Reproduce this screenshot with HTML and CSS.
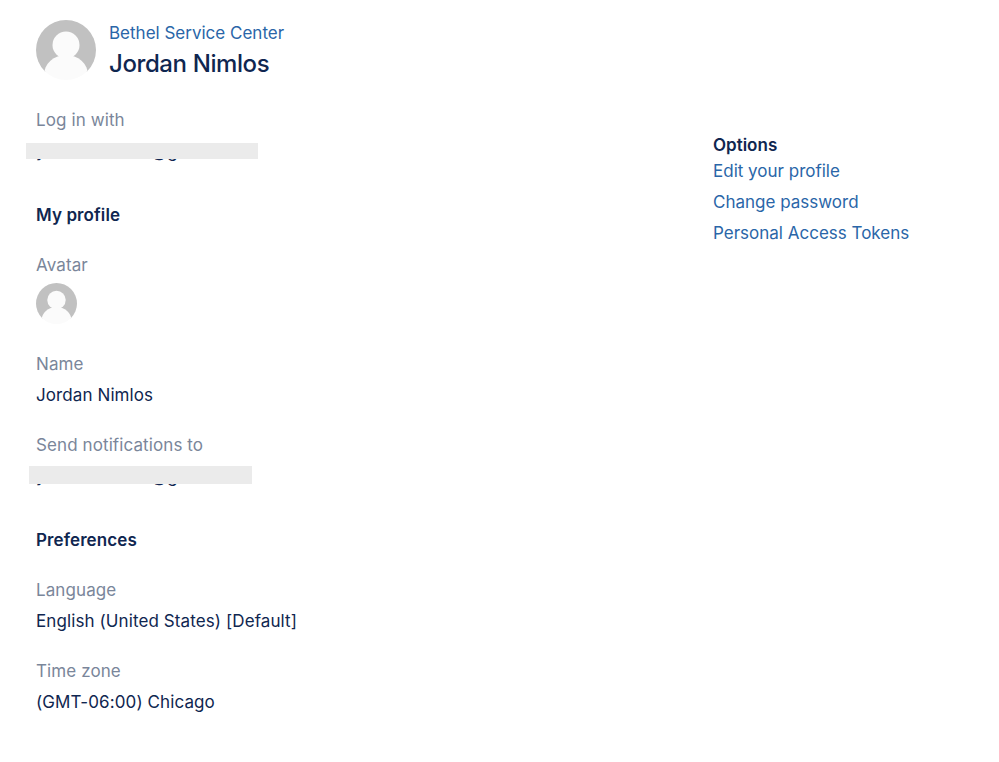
FILE: index.html
```html
<!DOCTYPE html>
<html>
<head>
<meta name="viewport" content="width=device-width, initial-scale=1">
<link rel="stylesheet" href="styles.css">
</head>
<body>

<div class="page-head">
  <svg class="avatar-lg" viewBox="0 0 60 60">
    <use href="#avatar"></use>
  </svg>
  <div>
    <a class="link crumb" href="#">Bethel Service Center</a>
    <h1>Jordan Nimlos</h1>
  </div>
</div>

<svg width="0" height="0" class="defs">
  <defs>
    <clipPath id="round"><circle cx="30" cy="30" r="30"></circle></clipPath>
    <g id="avatar" clip-path="url(#round)">
      <rect width="60" height="52" fill="#c1c1c1"></rect>
      <circle cx="30" cy="25" r="13.5" fill="#fbfbfb"></circle>
      <ellipse cx="30" cy="55" rx="22" ry="20" fill="#fbfbfb"></ellipse>
    </g>
  </defs>
</svg>

<div class="columns">
  <div class="main">
    <div class="field first">
      <div class="label">Log in with</div>
      <div class="value hidden-value">
        <span>y</span><span class="skip"></span><span>@g</span>
        <div class="redact login"></div>
      </div>
    </div>

    <h2>My profile</h2>

    <div class="field">
      <div class="label">Avatar</div>
      <svg class="avatar-sm" viewBox="0 0 60 60">
        <use href="#avatar"></use>
      </svg>
    </div>

    <div class="field name">
      <div class="label">Name</div>
      <div class="value">Jordan Nimlos</div>
    </div>

    <div class="field">
      <div class="label">Send notifications to</div>
      <div class="value hidden-value">
        <span>y</span><span class="skip"></span><span>@g</span>
        <div class="redact notify"></div>
      </div>
    </div>

    <h2>Preferences</h2>

    <div class="field">
      <div class="label">Language</div>
      <div class="value">English (United States) [Default]</div>
    </div>

    <div class="field">
      <div class="label">Time zone</div>
      <div class="value">(GMT-06:00) Chicago</div>
    </div>
  </div>

  <div class="side">
    <h3>Options</h3>
    <ul>
      <li><a class="link" href="#">Edit your profile</a></li>
      <li><a class="link" href="#">Change password</a></li>
      <li><a class="link" href="#">Personal Access Tokens</a></li>
    </ul>
  </div>
</div>

</body>
</html>
```

FILE: styles.css
```css
body {
  margin: 0;
  background: #fff;
  color: #0f2650;
  font-family: Inter, 'Liberation Sans', sans-serif;
  font-size: 17px;
  line-height: 24px;
}

.defs {
  position: absolute;
}

.link {
  color: #2a66a8;
  text-decoration: none;
}

/* Header with the big avatar */
.page-head {
  display: flex;
  gap: 13px;
  padding: 20px 0 0 36px;
}

.avatar-lg {
  width: 60px;
  height: 60px;
}

.crumb {
  display: block;
  height: 24px;
  line-height: 26px;
}

h1 {
  margin: 5px 0 0;
  font-size: 24px;
  line-height: 30px;
  font-weight: 500;
  letter-spacing: -0.4px;
}

.columns {
  display: flex;
}

/* Left column with the profile fields */
.main {
  width: 713px;
  padding-left: 36px;
  box-sizing: border-box;
  letter-spacing: 0.1px;
}

.field {
  margin-top: 26px;
}

.field.first {
  margin-top: 28px;
}

.field.name {
  margin-top: 28px;
}

.label {
  color: #7a869a;
  height: 24px;
}

.value {
  margin-top: 7px;
}

h2 {
  margin: 40px 0 0;
  font-size: 17px;
  line-height: 24px;
  font-weight: 600;
}

.avatar-sm {
  display: block;
  width: 41px;
  height: 41px;
  margin-top: 6px;
}

/* Address hidden under a grey bar, only descenders stick out */
.hidden-value {
  position: relative;
  display: flex;
}

.skip {
  width: 105px;
}

.redact {
  position: absolute;
}

.redact.login {
  top: 4px;
  left: -10px;
  width: 232px;
  height: 16px;
  background: #ebebeb;
}

.redact.notify {
  top: 2px;
  left: -7px;
  width: 223px;
  height: 18px;
  background: #ebebeb;
}

/* Options on the right */
.side {
  padding-top: 53px;
}

h3 {
  margin: 0 0 2px;
  font-size: 17px;
  line-height: 24px;
  font-weight: 600;
}

ul {
  margin: 0;
  padding: 0;
  list-style-type: none;
}

li {
  margin-bottom: 7px;
}
```
